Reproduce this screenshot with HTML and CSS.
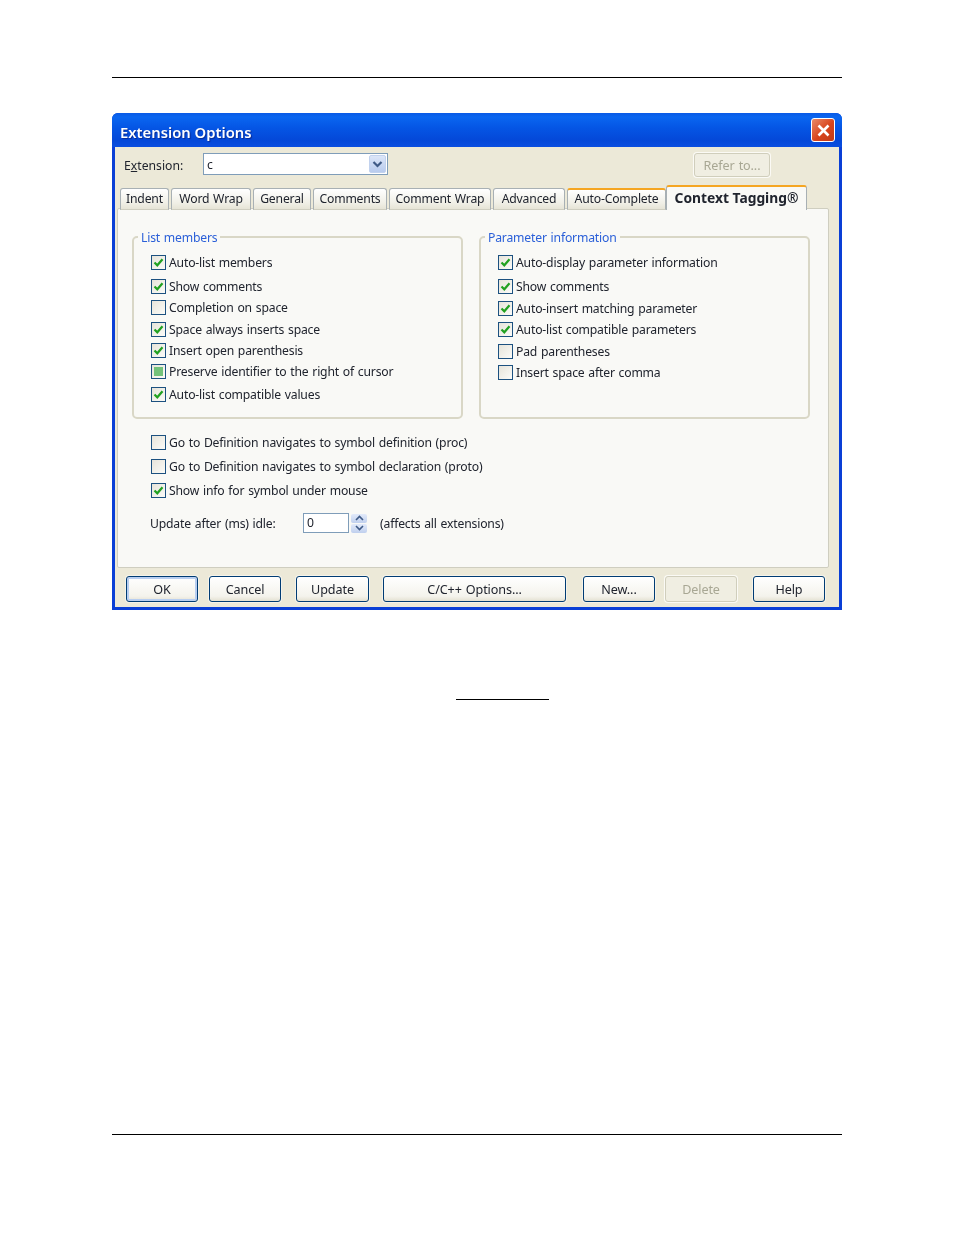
FILE: index.html
```html
<!DOCTYPE html>
<html lang="en">
<head>
    <meta charset="UTF-8">
    <meta name="viewport" content="width=device-width, initial-scale=1.0">
    <title>Extension Options</title>
    <link rel="stylesheet" href="styles.css">
</head>
<body>
    <svg class="defs" width="0" height="0">
        <symbol id="check" viewBox="0 0 11 11">
            <path d="M1.5 5.5 L4.3 8.3 L9.5 2.2" fill="none" stroke="#21a121" stroke-width="2.2"/>
        </symbol>
    </svg>

    <div class="page">
        <div class="rule-top"></div>

        <div class="dialog">
            <div class="titlebar">
                <span class="title">Extension Options</span>
                <span class="close">
                    <svg width="15" height="15" viewBox="0 0 15 15"><path d="M2.5 2.5 L12.5 12.5 M12.5 2.5 L2.5 12.5" stroke="#fff" stroke-width="2.6" fill="none"/></svg>
                </span>
            </div>

            <div class="client">
                <div class="ext-row">
                    <label class="ext-label">E<u>x</u>tension:</label>
                    <div class="combo">
                        <span class="combo-value">c</span>
                        <span class="combo-btn">
                            <svg width="11" height="9" viewBox="0 0 11 9"><path d="M1.5 2 L5.5 6 L9.5 2" fill="none" stroke="#3f5a86" stroke-width="2.2"/></svg>
                        </span>
                    </div>
                    <button class="btn btn-disabled btn-refer">Refer to...</button>
                </div>

                <div class="tabs">
                    <div class="tab">Indent</div>
                    <div class="tab">Word Wrap</div>
                    <div class="tab">General</div>
                    <div class="tab">Comments</div>
                    <div class="tab">Comment Wrap</div>
                    <div class="tab">Advanced</div>
                    <div class="tab tab-hover">Auto-Complete</div>
                    <div class="tab tab-active">Context Tagging®</div>
                </div>

                <div class="panel">
                    <div class="groups">
                        <fieldset class="group">
                            <legend>List members</legend>
                            <div class="opt"><span class="box"><svg><use href="#check"/></svg></span>Auto-list members</div>
                            <div class="opt opt-wide"><span class="box"><svg><use href="#check"/></svg></span>Show comments</div>
                            <div class="opt"><span class="box"></span>Completion on space</div>
                            <div class="opt"><span class="box"><svg><use href="#check"/></svg></span>Space always inserts space</div>
                            <div class="opt"><span class="box"><svg><use href="#check"/></svg></span>Insert open parenthesis</div>
                            <div class="opt"><span class="box box-mixed"><i></i></span>Preserve identifier to the right of cursor</div>
                            <div class="opt opt-gap"><span class="box"><svg><use href="#check"/></svg></span>Auto-list compatible values</div>
                        </fieldset>
                        <fieldset class="group">
                            <legend>Parameter information</legend>
                            <div class="opt"><span class="box"><svg><use href="#check"/></svg></span>Auto-display parameter information</div>
                            <div class="opt opt-wide"><span class="box"><svg><use href="#check"/></svg></span>Show comments</div>
                            <div class="opt opt-tall"><span class="box"><svg><use href="#check"/></svg></span>Auto-insert matching parameter</div>
                            <div class="opt"><span class="box"><svg><use href="#check"/></svg></span>Auto-list compatible parameters</div>
                            <div class="opt"><span class="box"></span>Pad parentheses</div>
                            <div class="opt"><span class="box"></span>Insert space after comma</div>
                        </fieldset>
                    </div>

                    <div class="lower">
                        <div class="opt opt-lower"><span class="box"></span>Go to Definition navigates to symbol definition (proc)</div>
                        <div class="opt opt-lower"><span class="box"></span>Go to Definition navigates to symbol declaration (proto)</div>
                        <div class="opt opt-lower"><span class="box"><svg><use href="#check"/></svg></span>Show info for symbol under mouse</div>

                        <div class="idle-row">
                            <span class="idle-label">Update after (ms) idle:</span>
                            <span class="spin-input">0</span>
                            <span class="spin">
                                <span class="spin-part"><svg width="9" height="6" viewBox="0 0 9 6"><path d="M1 5 L4.5 1.5 L8 5" fill="none" stroke="#3f5a86" stroke-width="1.6"/></svg></span>
                                <span class="spin-part"><svg width="9" height="6" viewBox="0 0 9 6"><path d="M1 1 L4.5 4.5 L8 1" fill="none" stroke="#3f5a86" stroke-width="1.6"/></svg></span>
                            </span>
                            <span class="idle-note">(affects all extensions)</span>
                        </div>
                    </div>
                </div>

                <div class="buttons">
                    <button class="btn btn-default">OK</button>
                    <button class="btn btn-cancel">Cancel</button>
                    <button class="btn btn-update">Update</button>
                    <button class="btn btn-cpp">C/C++ Options...</button>
                    <button class="btn btn-new">New...</button>
                    <button class="btn btn-disabled btn-delete">Delete</button>
                    <button class="btn btn-help">Help</button>
                </div>
            </div>
        </div>

        <div class="footnote-rule"></div>
        <div class="rule-bottom"></div>
    </div>
</body>
</html>
```

FILE: styles.css
```css
* {
    box-sizing: border-box;
}
html, body {
    margin: 0;
    background: #fff;
}
body {
    height: 1235px;
    overflow: hidden;
    font-family: "Noto Sans", "Open Sans", sans-serif;
    font-size: 12.2px;
    letter-spacing: -0.18px;
    word-spacing: 0.8px;
    color: #20242e;
}
.defs {
    display: block;
    height: 0;
}
.page {
    width: 730px;
    margin-left: 112px;
    padding-top: 77px;
}
.rule-top, .rule-bottom {
    height: 1px;
    background: #000;
}
.dialog {
    margin-top: 35px;
    width: 730px;
    height: 497px;
    background: #0a3fd6;
    border-radius: 6px 6px 0 0;
    display: flex;
    flex-direction: column;
    filter: blur(0.3px);
}
.titlebar {
    height: 34px;
    flex: none;
    display: flex;
    align-items: center;
    justify-content: space-between;
    padding: 0 7px 0 8px;
    border-radius: 6px 6px 0 0;
    background: linear-gradient(#0a5ae6 0%, #0a66f0 12%, #0555e4 45%, #0448d8 80%, #0a4ee0 100%);
}
.title {
    color: #fff;
    font-size: 14.8px;
    font-weight: 600;
    letter-spacing: 0;
    word-spacing: 0;
    padding-top: 4px;
    text-shadow: 1px 1px 1px #0a2a90;
}
.close {
    width: 24px;
    height: 24px;
    border: 1px solid #fff;
    border-radius: 3px;
    background: linear-gradient(135deg, #e98a68, #d8441c 55%, #c03a18);
    display: flex;
    align-items: center;
    justify-content: center;
}
.client {
    flex: 1;
    margin: 0 3px 3px 3px;
    background: #ece9d8;
    display: flex;
    flex-direction: column;
}
.ext-row {
    height: 38px;
    flex: none;
    display: flex;
    align-items: flex-start;
    padding: 6px 0 0 9px;
}
.ext-label {
    width: 79px;
    margin-top: 4px;
    line-height: 18px;
    letter-spacing: 0;
}
.combo {
    width: 185px;
    height: 22px;
    background: #fff;
    border: 1px solid #7f9db9;
    display: flex;
    justify-content: space-between;
    padding: 1px;
}
.combo-value {
    padding-left: 2px;
    line-height: 19px;
}
.combo-btn {
    width: 17px;
    background: linear-gradient(#dce6f8, #b8cbee);
    border: 1px solid #c2d2ee;
    border-radius: 2px;
    display: flex;
    align-items: center;
    justify-content: center;
}
.btn-refer {
    width: 76px;
    height: 24px;
    margin-left: 306px;
}
.btn {
    padding: 0;
    font-family: inherit;
    font-size: 12.6px;
    letter-spacing: -0.1px;
    word-spacing: 0.8px;
    color: #20242e;
    background: linear-gradient(#fff, #f4f3ec 80%, #e4e1d2);
    border: 1px solid #003c74;
    border-radius: 3px;
    box-shadow: 0 0 0 1px #f5f3ea;
}
.btn-disabled {
    color: #a8a794;
    background: #f0eee2;
    border-color: #d0cebc;
    box-shadow: 0 0 0 1px #fbfaf5;
}
.tabs {
    height: 24px;
    flex: none;
    display: grid;
    grid-template-columns: 49px 80px 58px 74px 102px 72px 99px 139px;
    gap: 2px;
    padding-left: 5px;
    align-items: end;
    margin-bottom: -1px;
    position: relative;
    z-index: 1;
}
.tab {
    height: 22px;
    line-height: 20px;
    text-align: center;
    background: linear-gradient(#fff, #f0efe6 70%, #e6e4d6);
    border: 1px solid #a8b0b4;
    border-bottom: 1px solid #cfcec0;
    border-radius: 3px 3px 0 0;
}
.tab-hover {
    border-top: 2px solid #f5a623;
    line-height: 18px;
}
.tab-active {
    height: 25px;
    margin-left: -2px;
    line-height: 21px;
    font-size: 13.8px;
    font-weight: 700;
    letter-spacing: 0;
    word-spacing: 0;
    background: #f9f9f6;
    border-top: 2px solid #f5a623;
    border-bottom: none;
}
.panel {
    width: 712px;
    height: 360px;
    flex: none;
    margin-left: 2px;
    background: #f9f9f6;
    border: 1px solid #cfcec0;
    border-radius: 2px;
    padding: 19px 0 0 14px;
}
.groups {
    display: grid;
    grid-template-columns: 331px 331px;
    gap: 16px;
}
.group {
    height: 191px;
    margin: 0;
    padding: 6px 0 0 17px;
    border: 2px solid #d9d7c6;
    border-radius: 5px;
    min-width: 0;
}
.group legend {
    margin-left: -13px;
    padding: 2px 3px 0;
    line-height: 16px;
    color: #2a5fd8;
}
.opt {
    height: 21.3px;
    display: flex;
    align-items: center;
    white-space: nowrap;
}
.opt-wide {
    height: 24px;
    padding-top: 2px;
}
.opt-gap {
    height: 23px;
    padding-top: 2px;
}
.opt-tall {
    height: 22px;
    padding-top: 1px;
}
.box {
    width: 15px;
    height: 15px;
    flex: none;
    margin-right: 3px;
    background: linear-gradient(135deg, #e6e4da, #fbfbf8);
    border: 1px solid #1c5180;
    display: flex;
    align-items: center;
    justify-content: center;
}
.box svg {
    width: 11px;
    height: 11px;
}
.box-mixed i {
    display: block;
    width: 9px;
    height: 9px;
    background: #73c27a;
}
.lower {
    padding: 11px 0 0 19px;
}
.opt-lower {
    height: 24px;
}
.idle-row {
    display: flex;
    align-items: center;
    height: 20px;
    margin-top: 11px;
}
.idle-label {
    width: 153px;
    margin-left: -1px;
}
.spin-input {
    width: 46px;
    height: 20px;
    padding-left: 3px;
    line-height: 17px;
    background: #fff;
    border: 1px solid #7f9db9;
}
.spin {
    width: 16px;
    height: 19px;
    margin-left: 2px;
    display: flex;
    flex-direction: column;
    gap: 1px;
}
.spin-part {
    flex: 1;
    background: linear-gradient(#e2eafa, #c0d0ee);
    border-radius: 2px;
    display: flex;
    align-items: center;
    justify-content: center;
}
.idle-note {
    margin-left: 13px;
}
.buttons {
    display: flex;
    padding: 8px 0 0 11px;
}
.buttons .btn {
    height: 26px;
    width: 72px;
}
.buttons .btn-default {
    box-shadow: inset 0 0 0 2px #b8cef0, 0 0 0 1px #f5f3ea;
}
.buttons .btn-cancel {
    margin-left: 11px;
}
.buttons .btn-update {
    margin-left: 15px;
    width: 73px;
}
.buttons .btn-cpp {
    margin-left: 14px;
    width: 183px;
}
.buttons .btn-new {
    margin-left: 17px;
}
.buttons .btn-delete {
    margin-left: 10px;
}
.buttons .btn-help {
    margin-left: 16px;
}
.footnote-rule {
    width: 93px;
    height: 1px;
    margin: 89px 0 0 344px;
    background: #000;
}
.rule-bottom {
    margin-top: 434px;
}
```
